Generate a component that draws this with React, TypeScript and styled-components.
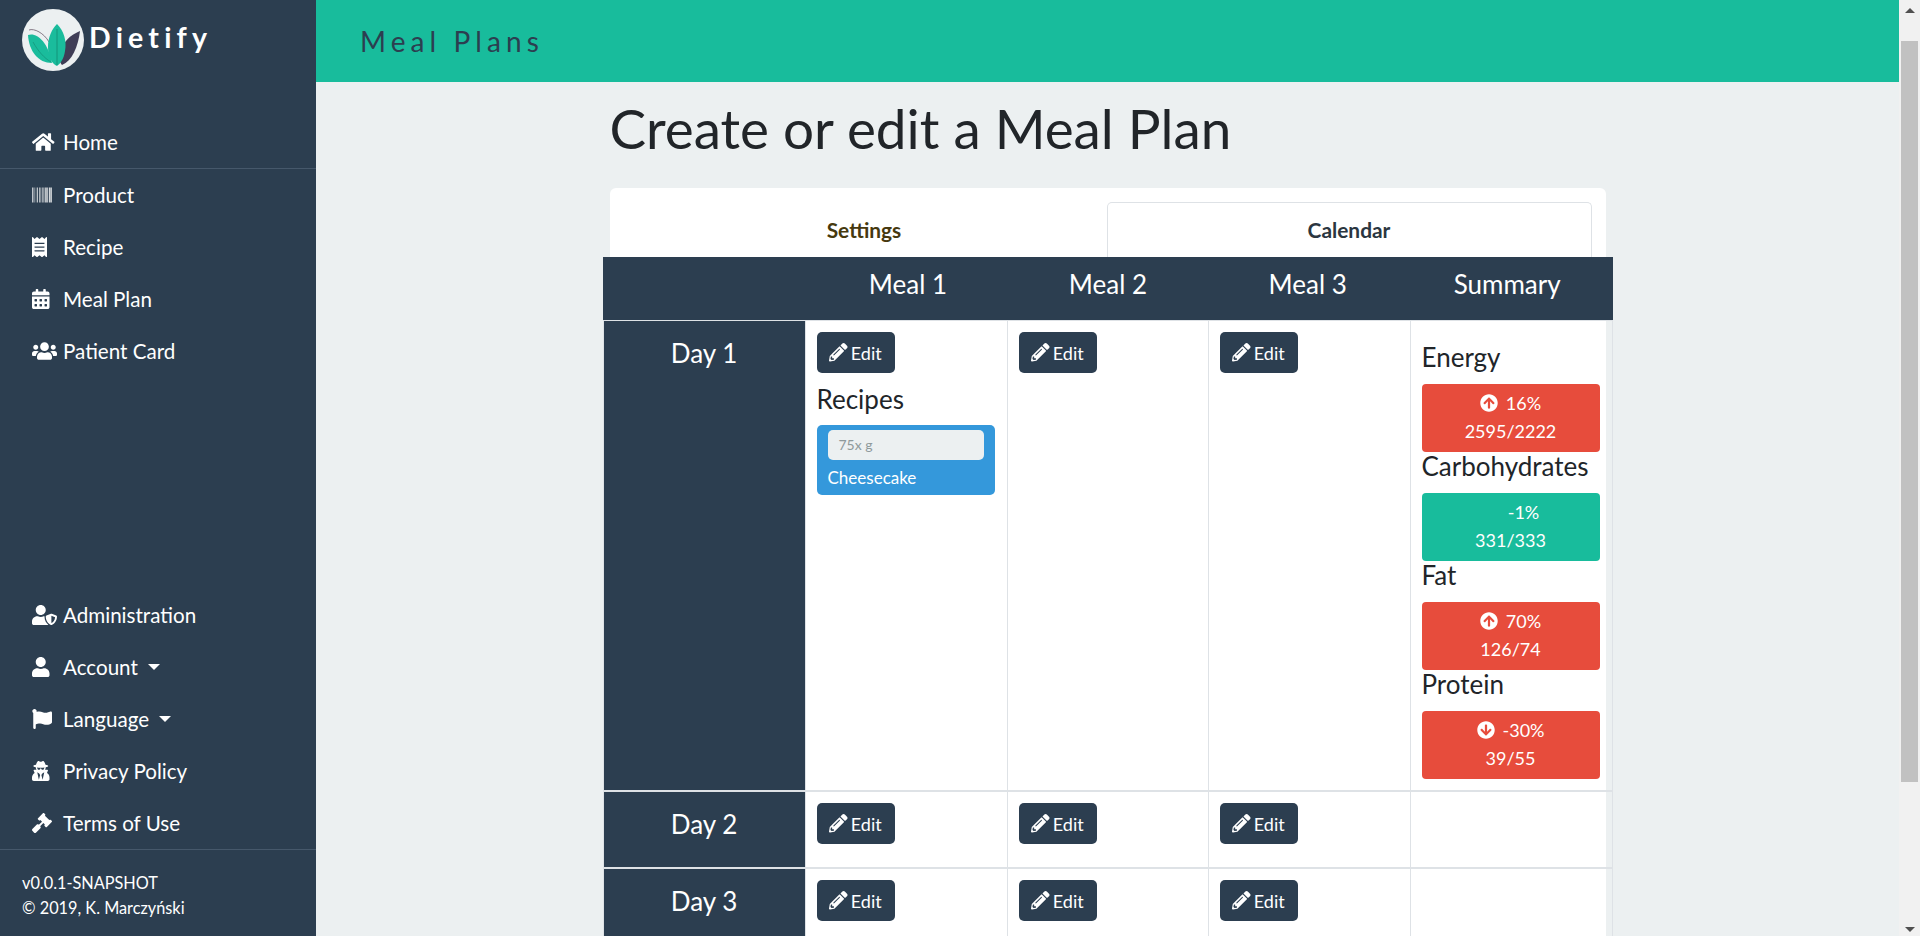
import React from "react";
import styled, { createGlobalStyle } from "styled-components";
import {
  FaHome, FaBarcode, FaReceipt, FaCalendarAlt, FaUsers, FaUserShield, FaUser, FaFlag,
  FaUserSecret, FaGavel, FaPencilAlt, FaArrowCircleUp, FaArrowCircleDown,
} from "react-icons/fa";

const Global = createGlobalStyle`
  html, body { margin: 0; height: 100%; overflow: hidden; }
  body { font-family: Lato, "Liberation Sans", sans-serif; background: #ecf0f1; color: #212529; }
  * { box-sizing: border-box; }
`;

const Shell = styled.div`
  display: flex;
  height: 100vh;
  overflow: hidden;
`;

const Sidebar = styled.aside`
  flex: none;
  width: 316px;
  background: #2c3e50;
  color: #fff;
  display: flex;
  flex-direction: column;
`;

const Brand = styled.div`
  height: 116px;
  padding: 9px 0 0 22px;
  display: flex;
  align-items: flex-start;
`;

const BrandName = styled.span`
  margin: 14px 0 0 5px;
  font-size: 28.5px;
  line-height: 28px;
  font-weight: 700;
  letter-spacing: 5.2px;
`;

const NavGroup = styled.nav<{ $bottom?: boolean }>`
  display: flex;
  flex-direction: column;
  margin-top: ${(p) => (p.$bottom ? "auto" : "0")};
`;

const NavItem = styled.a<{ $divided?: boolean }>`
  display: flex;
  align-items: center;
  height: ${(p) => (p.$divided ? "53px" : "52px")};
  padding: 0 0 ${(p) => (p.$divided ? "1px" : "0")} 32px;
  font-size: 20.6px;
  color: #fff;
  border-bottom: ${(p) => (p.$divided ? "1px solid #46586b" : "0")};
`;

const NavIcon = styled.span<{ $w: number }>`
  width: 31px;
  flex: none;
  display: flex;
  align-items: center;
  svg { display: block; height: 20px; width: ${(p) => p.$w}px; flex: none; }
`;

const Caret = styled.span`
  margin-left: 10px;
  width: 0;
  height: 0;
  border-left: 6px solid transparent;
  border-right: 6px solid transparent;
  border-top: 6px solid #fff;
`;

const Footer = styled.footer`
  border-top: 1px solid #46586b;
  height: 87px;
  padding: 21px 0 0 22px;
  font-size: 16.3px;
  line-height: 24.5px;
`;

const Main = styled.main`
  flex: 1;
  min-width: 0;
  overflow: hidden;
`;

const Rail = styled.div`
  flex: none;
  width: 21px;
  background: #f1f1f1;
  display: flex;
  flex-direction: column;
  align-items: center;
`;

const RailArrow = styled.span<{ $down?: boolean }>`
  width: 0;
  height: 0;
  border-left: 5px solid transparent;
  border-right: 5px solid transparent;
  ${(p) =>
    p.$down
      ? "border-top: 5px solid #505050; margin-top: auto; margin-bottom: 4px;"
      : "border-bottom: 5px solid #505050; margin-top: 8px;"}
`;

const RailThumb = styled.div`
  width: 17px;
  height: 741px;
  margin-top: 28px;
  background: #c1c1c1;
`;

const TopBar = styled.header`
  height: 82px;
  background: #18bc9c;
  display: flex;
  align-items: center;
  padding: 0 0 1px 44px;
  font-size: 28px;
  letter-spacing: 5.1px;
  color: #2c3e50;
`;

const Content = styled.div`
  width: 996px;
  margin: 0 auto;
  padding-top: 15px;
`;

const Title = styled.h1`
  margin: 0 0 29px;
  font-size: 54.8px;
  line-height: 62px;
  font-weight: 400;
  color: #212529;
`;

const Card = styled.section`
  background: #fff;
  border-radius: 6px 6px 0 0;
  padding-top: 14px;
`;

const Tabs = styled.div`
  display: flex;
  height: 55px;
  padding: 0 14px 0 12px;
`;

const Tab = styled.div<{ $active?: boolean }>`
  flex: 1;
  display: flex;
  align-items: center;
  justify-content: center;
  padding-bottom: 2px;
  font-size: 20.9px;
  font-weight: 700;
  color: ${(p) => (p.$active ? "#46390f" : "#2b3640")};
  border: 1px solid ${(p) => (p.$active ? "transparent" : "#dee2e6")};
  border-bottom: 0;
  border-radius: 5px 5px 0 0;
`;

const PlanTable = styled.table`
  table-layout: fixed;
  width: 1010px;
  margin-left: -7px;
  border-collapse: separate;
  border-spacing: 0;
`;

const HeadCell = styled.th<{ $nudge?: number }>`
  height: 64px;
  padding: 0 ${(p) => Math.max(0, -(p.$nudge ?? 0)) * 2}px 10px ${(p) => Math.max(0, p.$nudge ?? 0) * 2}px;
  background: #2c3e50;
  color: #fff;
  font-size: 26px;
  font-weight: 400;
  text-align: center;
  border-bottom: 1px solid #dee2e6;
`;

const DayCell = styled.th`
  padding: 12px 0 0;
  height: 77px;
  background: #2c3e50;
  background-clip: padding-box;
  color: #fff;
  font-size: 26px;
  line-height: 40px;
  font-weight: 400;
  text-align: center;
  vertical-align: top;
  border-left: 1px solid #dee2e6;
  border-top: 2px solid #dee2e6;
  tr:first-child & { border-top: 0; }
`;

const Cell = styled.td`
  padding: 11px 12px 11px 11px;
  vertical-align: top;
  border-left: 1px solid #dee2e6;
  border-top: 2px solid #dee2e6;
  tr:first-child & { border-top: 0; }
  &:last-child { border-right: 1px solid #dee2e6; }
`;

const EditButton = styled.button`
  display: inline-flex;
  align-items: center;
  justify-content: center;
  gap: 3px;
  width: 78px;
  height: 41px;
  padding: 0;
  border: 0;
  border-radius: 5px;
  background: #2c3e50;
  color: #fff;
  font: 400 18px Lato, sans-serif;
  svg { width: 18.5px; height: 18.5px; }
`;

const SubHeading = styled.h4<{ $first?: boolean }>`
  margin: ${(p) => (p.$first ? "11px" : "0")} 0 12px;
  font-size: 26px;
  line-height: 29px;
  font-weight: 400;
  color: #212529;
`;

const RecipesHeading = styled(SubHeading)`
  margin: 12px 0 11px;
`;

const RecipeCard = styled.div`
  height: 70px;
  border-radius: 5px;
  background: #3498db;
  color: #fff;
  padding: 5px 11px 0;
  font-size: 17px;
`;

const Amount = styled.div`
  height: 30px;
  border-radius: 5px;
  background: #ecf0f1;
  color: #8f9a9c;
  font-size: 14px;
  line-height: 30px;
  padding-left: 11px;
  margin-bottom: 7px;
`;

const Stat = styled.div<{ $ok?: boolean }>`
  height: 68px;
  border-radius: 4px;
  background: ${(p) => (p.$ok ? "#18bc9c" : "#e74c3c")};
  color: #fff;
  font-size: 18px;
  line-height: 28px;
  padding-top: 5px;
  text-align: center;
`;

const StatLine = styled.div`
  display: flex;
  align-items: center;
  justify-content: center;
  gap: 8px;
`;

const StatIcon = styled.span<{ $hidden?: boolean }>`
  display: flex;
  width: 18px;
  visibility: ${(p) => (p.$hidden ? "hidden" : "visible")};
  svg { width: 18px; height: 18px; }
`;

const Logo = () => (
  <svg width="62" height="62" viewBox="0 0 62 62" style={{ flex: "none" }}>
    <circle cx="31" cy="31" r="31" fill="#ecf0f1" />
    <path d="M58 22C56 38 50 52 40 56 C34 50 38 30 58 22Z" fill="#3f3d56" />
    <path d="M7 21C12 19 22 24 27 33" fill="none" stroke="#6b5b6b" strokeWidth="0.8" />
    <path d="M6 26C14 23 26 32 30 54 C16 54 7 42 6 26Z" fill="#1abc9c" />
    <path d="M35 15C42 22 45 32 43 42 C42 50 38 55 35 57 C30 55 26 48 26 38 C26 28 30 20 35 15Z" fill="#1abc9c" />
    <path d="M35 20V56" stroke="#128a72" strokeWidth="0.8" />
    <path d="M11 33C16 42 22 49 29 53" fill="none" stroke="#128a72" strokeWidth="0.6" />
  </svg>
);

const topNav = [
  { label: "Home", icon: <FaHome />, w: 22.5, divided: true },
  { label: "Product", icon: <FaBarcode />, w: 20 },
  { label: "Recipe", icon: <FaReceipt />, w: 15 },
  { label: "Meal Plan", icon: <FaCalendarAlt />, w: 17.5 },
  { label: "Patient Card", icon: <FaUsers />, w: 25 },
];

const bottomNav = [
  { label: "Administration", icon: <FaUserShield />, w: 25 },
  { label: "Account", icon: <FaUser />, w: 17.5, caret: true },
  { label: "Language", icon: <FaFlag />, w: 20, caret: true },
  { label: "Privacy Policy", icon: <FaUserSecret />, w: 17.5 },
  { label: "Terms of Use", icon: <FaGavel />, w: 20 },
];

const stats = [
  { name: "Energy", pct: "16%", value: "2595/2222", dir: "up" },
  { name: "Carbohydrates", pct: "-1%", value: "331/333", dir: "ok" },
  { name: "Fat", pct: "70%", value: "126/74", dir: "up" },
  { name: "Protein", pct: "-30%", value: "39/55", dir: "down" },
];

const heads = [
  { label: "Meal 1", nudge: 2.4 },
  { label: "Meal 2", nudge: 0.9 },
  { label: "Meal 3", nudge: -0.8 },
  { label: "Summary", nudge: -3.8 },
];

const Edit = () => (
  <EditButton>
    <FaPencilAlt />
    Edit
  </EditButton>
);

export default function App() {
  return (
    <Shell>
      <Global />
      <Sidebar>
        <Brand>
          <Logo />
          <BrandName>Dietify</BrandName>
        </Brand>
        <NavGroup>
          {topNav.map((n) => (
            <NavItem key={n.label} $divided={n.divided}>
              <NavIcon $w={n.w}>{n.icon}</NavIcon>
              {n.label}
            </NavItem>
          ))}
        </NavGroup>
        <NavGroup $bottom>
          {bottomNav.map((n) => (
            <NavItem key={n.label}>
              <NavIcon $w={n.w}>{n.icon}</NavIcon>
              {n.label}
              {n.caret && <Caret />}
            </NavItem>
          ))}
        </NavGroup>
        <Footer>
          v0.0.1-SNAPSHOT
          <br />© 2019, K. Marczyński
        </Footer>
      </Sidebar>
      <Main>
        <TopBar>Meal Plans</TopBar>
        <Content>
          <Title>Create or edit a Meal Plan</Title>
          <Card>
            <Tabs>
              <Tab $active>Settings</Tab>
              <Tab>Calendar</Tab>
            </Tabs>
            <PlanTable>
              <colgroup>
                {[202, 202, 201, 202, 203].map((w, i) => (
                  <col key={i} width={w} />
                ))}
              </colgroup>
              <thead>
                <tr>
                  <HeadCell />
                  {heads.map((h) => (
                    <HeadCell key={h.label} $nudge={h.nudge}>{h.label}</HeadCell>
                  ))}
                </tr>
              </thead>
              <tbody>
                <tr>
                  <DayCell>Day 1</DayCell>
                  <Cell>
                    <Edit />
                    <RecipesHeading>Recipes</RecipesHeading>
                    <RecipeCard>
                      <Amount>75x g</Amount>
                      Cheesecake
                    </RecipeCard>
                  </Cell>
                  <Cell><Edit /></Cell>
                  <Cell><Edit /></Cell>
                  <Cell>
                    {stats.map((s, i) => (
                      <React.Fragment key={s.name}>
                        <SubHeading $first={i === 0}>{s.name}</SubHeading>
                        <Stat $ok={s.dir === "ok"}>
                          <StatLine>
                            <StatIcon $hidden={s.dir === "ok"}>
                              {s.dir === "down" ? <FaArrowCircleDown /> : <FaArrowCircleUp />}
                            </StatIcon>
                            {s.pct}
                          </StatLine>
                          {s.value}
                        </Stat>
                      </React.Fragment>
                    ))}
                  </Cell>
                </tr>
                {["Day 2", "Day 3"].map((d) => (
                  <tr key={d}>
                    <DayCell>{d}</DayCell>
                    <Cell><Edit /></Cell>
                    <Cell><Edit /></Cell>
                    <Cell><Edit /></Cell>
                    <Cell />
                  </tr>
                ))}
              </tbody>
            </PlanTable>
          </Card>
        </Content>
      </Main>
      <Rail>
        <RailArrow />
        <RailThumb />
        <RailArrow $down />
      </Rail>
    </Shell>
  );
}
